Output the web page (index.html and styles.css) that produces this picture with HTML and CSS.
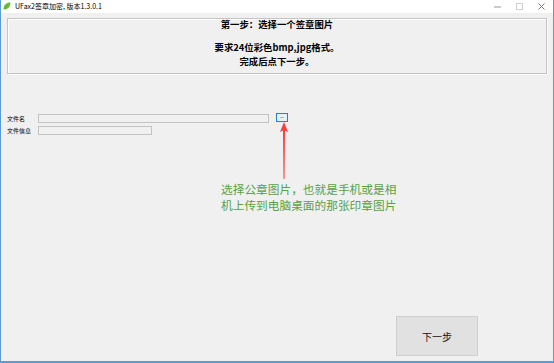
FILE: index.html
```html
<!DOCTYPE html>
<html lang="zh-CN">
<head>
    <meta charset="UTF-8">
    <title>UFax2签章加密, 版本1.3.0.1</title>
    <link rel="stylesheet" href="styles.css">
</head>
<body>
    <div class="window">
        <div class="titlebar">
            <svg class="app-icon" width="8" height="8" viewBox="0 0 8 8">
                <path d="M0.5 7.5 C0.5 3 3 0.5 7.5 0.5 C7.5 5 5 7.5 0.5 7.5 Z" fill="#6cbf3c"/>
                <path d="M1 7 L5.5 2.5" stroke="#4a9a28" stroke-width="0.6"/>
            </svg>
            <span class="title">UFax2签章加密, 版本1.3.0.1</span>
            <div class="controls">
                <span class="ctl">
                    <svg width="7" height="7" viewBox="0 0 7 7"><path d="M0 4 H7" stroke="#999" stroke-width="1"/></svg>
                </span>
                <span class="ctl">
                    <svg width="7" height="7" viewBox="0 0 7 7"><rect x="0.5" y="0.5" width="6" height="6" fill="none" stroke="#d0d0d0" stroke-width="1"/></svg>
                </span>
                <span class="ctl">
                    <svg width="7" height="7" viewBox="0 0 7 7"><path d="M0.5 0.5 L6.5 6.5 M6.5 0.5 L0.5 6.5" stroke="#777" stroke-width="1"/></svg>
                </span>
            </div>
        </div>

        <div class="content">
            <div class="group">
                <p>第一步：选择一个签章图片</p>
                <p>&nbsp;</p>
                <p>要求24位彩色bmp,jpg格式。</p>
                <p class="last">完成后点下一步。</p>
            </div>

            <div class="form">
                <div class="row">
                    <label class="label">文件名</label>
                    <div class="field wide"></div>
                    <button class="browse"><span>..</span></button>
                </div>
                <div class="row">
                    <label class="label">文件信息</label>
                    <div class="field short"></div>
                </div>
            </div>

            <div class="footer">
                <button class="next">下一步</button>
            </div>

            <div class="note">
                <svg class="arrow" width="10" height="58" viewBox="0 0 10 58">
                    <path d="M5 0 L9 10 L6 8.5 L5.5 57 L4.5 57 L4 8.5 L1 10 Z" fill="#ff3b3b"/>
                </svg>
                <div class="note-text">选择公章图片，也就是手机或是相<br>机上传到电脑桌面的那张印章图片</div>
            </div>
        </div>
    </div>
</body>
</html>
```

FILE: styles.css
```css
* {
    box-sizing: border-box;
}

body {
    margin: 0;
    font-family: "Noto Sans CJK SC", "Noto Sans", sans-serif;
    color: #000;
}

.window {
    width: 554px;
    height: 363px;
    display: flex;
    flex-direction: column;
    background-color: #fff;
    border: 1px solid #5b9bd5;
    border-top: none;
    border-bottom-width: 2px;
}

.titlebar {
    height: 13px;
    display: flex;
    align-items: center;
    padding-left: 2px;
    background-color: #fff;
}

.app-icon {
    margin-top: -1px;
}

.title {
    margin-left: 4px;
    font-size: 7px;
    line-height: 13px;
    color: #000;
}

.controls {
    margin-left: auto;
    display: flex;
    padding-right: 1px;
}

.ctl {
    width: 22px;
    display: flex;
    justify-content: center;
    align-items: center;
}

.ctl svg {
    display: block;
}

.content {
    position: relative;
    flex-grow: 1;
    display: flex;
    flex-direction: column;
    background-color: #f0f0f0;
    padding: 5px 6px 0 6px;
}

.group {
    border: 1px solid #c4c4c4;
    box-shadow: 1px 1px 0 #fff, inset 1px 1px 0 #fff;
    padding: 0 0 5px 0;
    text-align: center;
    font-size: 9.4px;
    font-weight: bold;
    line-height: 11.5px;
}

.group p {
    margin: 0;
}

.group .last {
    margin-top: 2.5px;
}

.form {
    margin-top: 40px;
    display: flex;
    flex-direction: column;
    gap: 3px;
}

.row {
    display: flex;
    align-items: center;
    height: 9px;
}

.label {
    width: 31px;
    font-size: 6px;
    line-height: 9px;
    white-space: nowrap;
}

.field {
    height: 9px;
    border: 1px solid #c3c3c3;
    background-color: #f0f0f0;
}

.wide {
    width: 231px;
}

.short {
    width: 114px;
}

.browse {
    margin-left: 7px;
    margin-top: -1px;
    width: 12px;
    height: 9px;
    padding: 0;
    border: 1px solid #1a82e2;
    background-color: #e5f1fb;
    font-size: 6px;
    line-height: 5px;
    color: #555;
    display: flex;
    justify-content: center;
    align-items: center;
}

.browse span {
    font-weight: bold;
    margin-top: -2px;
}

.footer {
    margin-top: auto;
    display: flex;
    justify-content: flex-end;
    padding-right: 69px;
    padding-bottom: 5px;
}

.next {
    width: 82px;
    height: 40px;
    border: 1px solid #cfcfcf;
    background-color: #e1e1e1;
    font-family: "Noto Sans CJK SC", sans-serif;
    font-size: 10px;
    color: #111;
}

/* annotation drawn over the form */
.note {
    position: absolute;
    left: 220px;
    top: 109px;
    width: 190px;
}

.arrow {
    display: block;
    margin-left: 58px;
}

.note-text {
    margin-top: 1px;
    font-size: 11.7px;
    line-height: 16px;
    color: #5aa046;
    white-space: nowrap;
}
```
